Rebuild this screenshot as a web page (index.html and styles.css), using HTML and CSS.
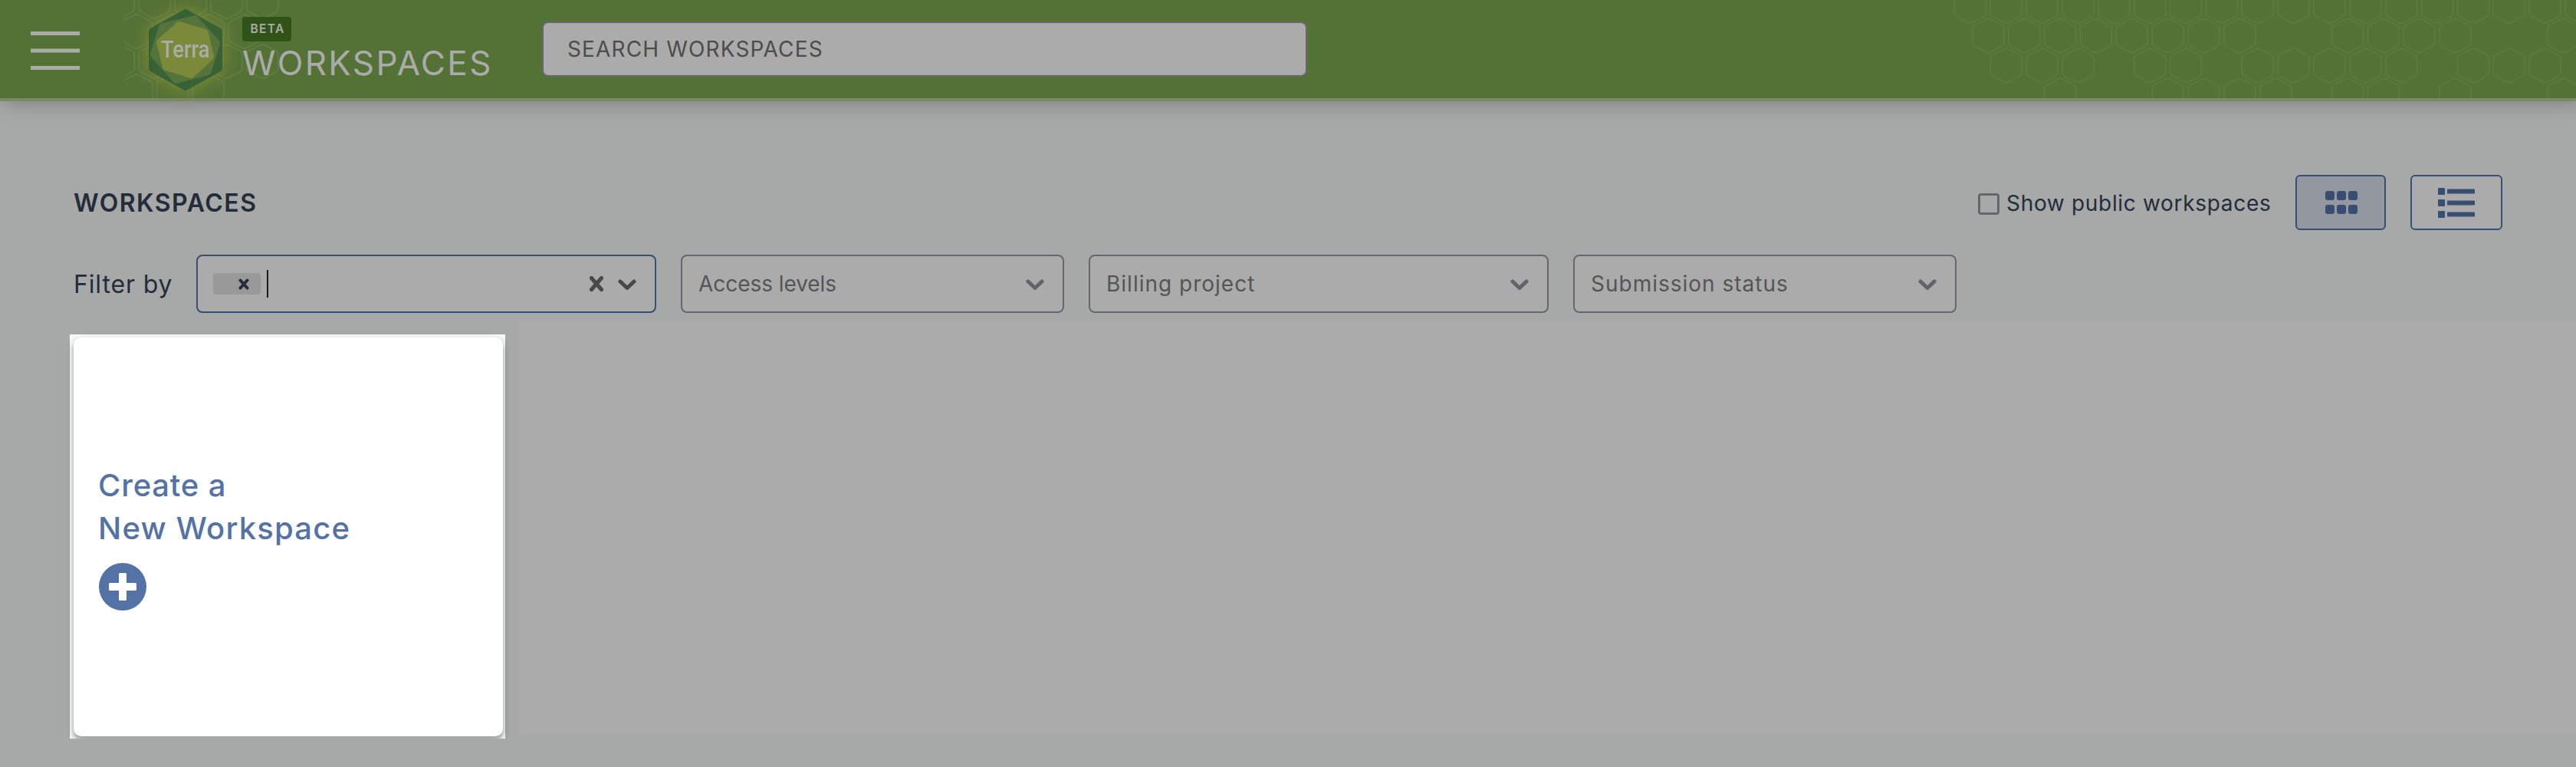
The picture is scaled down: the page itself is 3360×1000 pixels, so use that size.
FILE: index.html
```html
<!DOCTYPE html>
<html lang="en">
<head>
<meta charset="utf-8">
<title>Workspaces</title>
<link rel="stylesheet" href="styles.css">
</head>
<body>
<header class="topbar">
  <svg class="honeycomb" id="honeycomb" width="3360" height="128" viewBox="0 0 3360 128">
    <defs>
      <clipPath id="logo-clip"><rect x="162" y="0" width="220" height="128"/></clipPath>
      <path id="cell" d="M-20.500 -9Q-20.500 -12 -18 -13.500L-3 -21.300Q0 -23 3 -21.300L18 -13.500Q20.500 -12 20.500 -9V9Q20.500 12 18 13.500L3 21.300Q0 23 -3 21.300L-18 13.500Q-20.500 12 -20.500 9Z"/>
    </defs>
    <g id="cells-left" class="cells cells-left" clip-path="url(#logo-clip)"></g>
    <g id="cells-right" class="cells"></g>
  </svg>
  <svg class="menu" width="64" height="50" viewBox="0 0 64 50"><path d="M0 2.500H64M0 25H64M0 47.500H64"/></svg>
  <div class="logo">
    <svg width="96" height="106" viewBox="0 0 96 106">
      <path class="hex outer" d="M48 5L91 29V77L48 101L5 77V29Z"/>
      <path class="hex middle" d="M60 13L88 44L77 81L36 92L7 59L18 23Z"/>
      <path class="hex inner" d="M40 21L73 31L80 62L55 85L23 75L15 43Z"/>
    </svg>
    <span class="logo-name">Terra</span>
  </div>
  <div class="title"><span class="beta">BETA</span><span class="page-name">WORKSPACES</span></div>
  <div class="search">SEARCH WORKSPACES</div>
</header>
<main class="page">
  <div class="heading-row">
    <h1 class="heading">WORKSPACES</h1>
    <div class="view-tools">
      <label class="public"><span class="checkbox"></span><span>Show public workspaces</span></label>
      <div class="toggle toggle-grid active"><svg width="42" height="30" viewBox="0 0 42 30">
        <rect width="12" height="12" rx="3"/><rect x="15" width="12" height="12" rx="3"/><rect x="30" width="12" height="12" rx="3"/>
        <rect y="18" width="12" height="12" rx="3"/><rect x="15" y="18" width="12" height="12" rx="3"/><rect x="30" y="18" width="12" height="12" rx="3"/>
      </svg></div>
      <div class="toggle toggle-list"><svg width="48" height="39" viewBox="0 0 48 39">
        <rect width="9" height="9" rx="1"/><rect x="12" y="1.500" width="36" height="6" rx="1"/>
        <rect y="15" width="9" height="9" rx="1"/><rect x="12" y="16.500" width="36" height="6" rx="1"/>
        <rect y="30" width="9" height="9" rx="1"/><rect x="12" y="31.500" width="36" height="6" rx="1"/>
      </svg></div>
    </div>
  </div>
  <div class="filters">
    <span class="filter-label">Filter by</span>
    <div class="select wide focused">
      <span class="tag"><svg width="14" height="15" viewBox="0 0 14 15"><path d="M2.500 2.500L11.500 12.500M11.500 2.500L2.500 12.500"/></svg></span>
      <span class="caret"></span>
      <svg class="clear" width="20" height="22" viewBox="0 0 20 22"><path d="M3.500 3.500L16.500 18.500M16.500 3.500L3.500 18.500"/></svg>
      <svg class="chevron" width="24" height="15" viewBox="0 0 24 15"><path d="M3 3L12 11.500L21 3"/></svg>
    </div>
    <div class="select"><span class="access">Access levels</span><svg class="chevron" width="24" height="15" viewBox="0 0 24 15"><path d="M3 3L12 11.500L21 3"/></svg></div>
    <div class="select wide"><span>Billing project</span><svg class="chevron" width="24" height="15" viewBox="0 0 24 15"><path d="M3 3L12 11.500L21 3"/></svg></div>
    <div class="select"><span>Submission status</span><svg class="chevron" width="24" height="15" viewBox="0 0 24 15"><path d="M3 3L12 11.500L21 3"/></svg></div>
  </div>
  <div class="results">
    <div class="spotlight">
      <div class="spotlight-inner">
        <div class="card">
          <span class="card-first">Create a</span>
          <span class="card-second">New Workspace</span>
          <svg class="plus" width="62" height="62" viewBox="0 0 62 62"><circle cx="31" cy="31" r="31"/><rect x="13" y="26" width="36" height="10" rx="1.500"/><rect x="26" y="13" width="10" height="36" rx="1.500"/></svg>
        </div>
      </div>
    </div>
    <div class="empty"></div>
  </div>
</main>
<script src="honeycomb.js"></script>
</body>
</html>
```
FILE: honeycomb.js
```js
// Each row: first cell centre, row centre, and the columns that hold a cell.
const pitch = 46.86;
const range = (a, b) => Array.from({ length: b - a + 1 }, (_, i) => a + i);

function draw(id, rows) {
  const group = document.getElementById(id);
  for (const [x, y, columns] of rows) {
    for (const c of columns) {
      const cell = document.createElementNS('http://www.w3.org/2000/svg', 'use');
      cell.setAttribute('href', '#cell');
      cell.setAttribute('x', x + c * pitch);
      cell.setAttribute('y', y);
      group.appendChild(cell);
    }
  }
}

draw('cells-left', [
  [154.8, 2, range(0, 4)],
  [178.3, 41, [0, 1, 2, 3]],
  [154.8, 80, range(0, 4)],
  [178.3, 119, [0, 1]],
  [271.5, 119, [0]]
]);

draw('cells-right', [
  [2570, 8, range(0, 17)],
  [2593.3, 46.5, [...range(0, 7), ...range(10, 13), 16]],
  [2570, 85.5, [1, 2, 3, 5, 6, ...range(8, 12), 14, 15, 16]],
  [2593.3, 124.5, [2, 5, 6, 7, 8, 10, 11, 13, 16]]
]);
```
FILE: styles.css
```css
* { box-sizing: border-box; }
body { margin: 0; background: #a6a9a7; font-family: Inter, sans-serif; color: #242c3a; overflow: hidden; }
svg { display: block; flex: none; }

.topbar {
  position: relative;
  display: flex;
  align-items: flex-start;
  height: 132px;
  background: #557236;
  border-bottom: 4px solid #7a8a69;
  box-shadow: 6px 0 26px rgba(0, 0, 0, .3);
}
.topbar > * { position: relative; flex: none; }
.topbar > .honeycomb { position: absolute; left: 0; top: 0; }
.cells { fill: none; stroke: #5f7b42; stroke-width: 1.4; }
.cells-left { stroke: #617d47; stroke-width: 1.6; }
.menu { margin: 41px 0 0 40px; fill: none; stroke: #ababab; stroke-width: 5; }
.logo { display: grid; margin: 12px 0 0 90px; width: 96px; height: 106px; }
.logo > * { grid-area: 1 / 1; }
.logo svg { filter: drop-shadow(0 0 10px rgba(150, 152, 48, .75)); }
.hex { stroke-linejoin: round; stroke-width: 10; }
.outer { fill: #366236; stroke: #366236; }
.middle { fill: #55733a; stroke: #55733a; }
.inner { fill: #7b8a39; stroke: #7b8a39; }
.logo-name {
  position: relative;
  place-self: center start;
  margin: -1px 0 0 16px;
  color: #ababab;
  font: 500 31px/32px Roboto, sans-serif;
  transform: scaleX(.88);
  transform-origin: left;
}
.title { display: flex; flex-direction: column; align-items: flex-start; margin: 22px 0 0 26px; width: 391px; color: #ababab; }
.beta { width: 64px; height: 32px; padding-left: 10.500px; border-radius: 4px; background: #305417; font-size: 15.500px; font-weight: 600; line-height: 32px; letter-spacing: 1.3px; }
.page-name { margin-top: 6px; font-size: 44px; line-height: 45px; letter-spacing: 2.350px; }
.search {
  margin-top: 28px;
  width: 998px;
  height: 72px;
  padding-left: 31px;
  border: 2px solid #66676e;
  border-radius: 8px;
  background: #ababab;
  color: #4c4c4c;
  font-size: 28px;
  line-height: 68px;
  letter-spacing: 1.150px;
}

.page { padding: 96px 0 0 96px; }
.heading-row { display: flex; align-items: center; justify-content: space-between; height: 72px; padding-right: 96px; }
.heading { margin: 1px 0 0; font-size: 32px; font-weight: 600; line-height: 40px; letter-spacing: 1.5px; }
.view-tools { display: flex; align-items: center; }
.public { display: flex; align-items: center; width: 414px; font-size: 28px; line-height: 36px; letter-spacing: .68px; white-space: nowrap; }
.checkbox { flex: none; width: 28px; height: 28px; margin: 4px 9px 0 0; border: 3px solid #66676e; border-radius: 4px; }
.public span:last-child { margin-top: 2px; }
.toggle { display: flex; align-items: center; justify-content: center; height: 72px; border: 2px solid #384d72; border-radius: 6px; fill: #384d72; }
.toggle-grid { width: 118px; margin-right: 32px; background: #9297a0; padding-left: 2px; }
.toggle-list { width: 120px; background: #ababab; }

.filters { display: flex; align-items: center; gap: 32px; height: 76px; margin-top: 32px; }
.filter-label { width: 128px; margin-top: 1px; font-size: 32px; line-height: 40px; letter-spacing: .85px; white-space: nowrap; }
.select {
  display: flex;
  align-items: center;
  width: 500px;
  height: 76px;
  padding: 0 24px 0 21px;
  border: 2px solid #66676e;
  border-radius: 8px;
  background: #ababab;
  color: #555;
  font-size: 28px;
  letter-spacing: 1px;
}
.access { letter-spacing: -.05px; }
.wide { width: 600px; }
.focused { border-color: #384d72; padding-left: 20px; }
.select svg { fill: none; stroke-linecap: round; stroke-linejoin: round; stroke: #62636a; stroke-width: 5; }
.chevron { margin-left: auto; margin-top: 2px; }
.tag { display: flex; align-items: center; justify-content: flex-end; width: 62px; height: 28px; padding-right: 15px; border-radius: 4px; background: #999; }
.select .tag svg { stroke: #242c3a; stroke-width: 4; }
.caret { width: 2px; height: 36px; margin-left: 8px; background: #1c1c1c; }
.focused .clear { margin-left: auto; stroke: #484848; }
.focused .chevron { margin-left: 18px; stroke: #484848; }

.results { display: flex; align-items: flex-start; margin-top: 10px; }
.spotlight { position: relative; flex: none; margin: 18px 18px 0 -5px; width: 568px; height: 527px; }
.spotlight::before { content: ""; position: absolute; inset: 4px 3px 3px 5px; border-radius: 10px; box-shadow: 0 4px 10px rgba(0, 0, 0, .35), 0 6px 4px rgba(0, 0, 0, .12); }
.spotlight-inner { position: relative; height: 527px; padding: 4px 3px 3px 5px; overflow: hidden; background: #f9fbfb; }
.card {
  display: flex;
  flex-direction: column;
  justify-content: center;
  height: 520px;
  padding-left: 32px;
  border-radius: 10px;
  background: #fff;
  box-shadow: 0 4px 10px rgba(0, 0, 0, .35), 0 6px 4px rgba(0, 0, 0, .12);
  color: #5472a5;
  font-size: 40px;
  font-weight: 500;
  line-height: 56px;
}
.card-first { letter-spacing: .8px; }
.card-second { letter-spacing: 1.2px; }
.plus { margin: 17px 0 0 1px; fill: #5472a5; }
.plus rect { fill: #fff; }
.empty { flex: 1; height: 539px; background: #ababab; }
```
